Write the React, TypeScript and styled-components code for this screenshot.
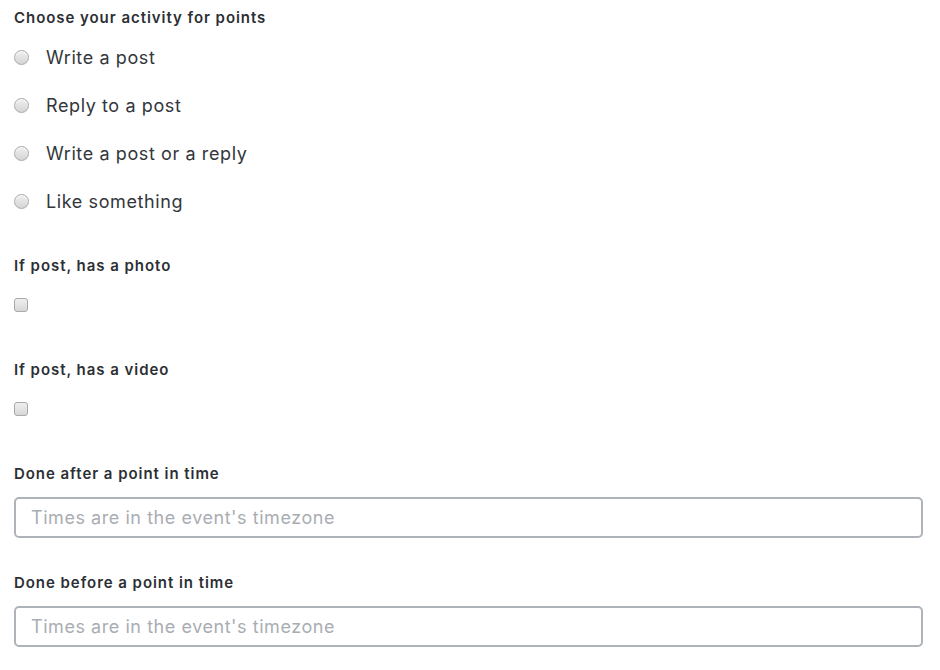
import React from 'react';
import styled, { createGlobalStyle } from 'styled-components';

const GlobalStyle = createGlobalStyle`
  body {
    margin: 0;
    background: #ffffff;
    font-family: Inter, "Noto Sans", sans-serif;
    color: #2c2f34;
  }
`

const activities = [
    "Write a post",
    "Reply to a post",
    "Write a post or a reply",
    "Like something"
]

function App() {
    return (
        <>
            <GlobalStyle />
            <Form>
                <Field gap={31}>
                    <Label>Choose your activity for points</Label>
                    <RadioList>
                        {activities.map(a => (
                            <RadioRow key={a}>
                                <Radio type="radio" name="activity" />
                                {a}
                            </RadioRow>
                        ))}
                    </RadioList>
                </Field>
                <Field gap={48}>
                    <Label>If post, has a photo</Label>
                    <Checkbox type="checkbox" />
                </Field>
                <Field gap={48}>
                    <Label>If post, has a video</Label>
                    <Checkbox type="checkbox" />
                </Field>
                <Field gap={35}>
                    <Label>Done after a point in time</Label>
                    <TextInput placeholder="Times are in the event's timezone" />
                </Field>
                <Field gap={0}>
                    <Label>Done before a point in time</Label>
                    <TextInput placeholder="Times are in the event's timezone" />
                </Field>
            </Form>
        </>
    )
}

const Form = styled.form`
    display: flex;
    flex-direction: column;
    padding: 8px 17px 0 14px;
`

const Field = styled.div<{ gap: number }>`
    display: flex;
    flex-direction: column;
    align-items: flex-start;
    margin-bottom: ${p => p.gap}px;
`

const Label = styled.label`
    font-size: 15px;
    font-weight: 600;
    line-height: 20px;
    letter-spacing: 0.95px;
    color: #2c2f34;
    margin-bottom: 12px;
`

const RadioList = styled.div`
    display: flex;
    flex-direction: column;
    margin-top: -7px;
`

const RadioRow = styled.label`
    display: flex;
    align-items: center;
    height: 48px;
    font-size: 18px;
    letter-spacing: 0.6px;
    color: #33363b;
`

const Radio = styled.input`
    appearance: none;
    box-sizing: border-box;
    width: 15px;
    height: 15px;
    margin: 0 17px 0 0;
    border-radius: 50%;
    border: 1px solid #a9a9a9;
    background: linear-gradient(#f0f0f0, #d4d4d4);
    box-shadow: inset 0 1px 1px rgba(255, 255, 255, 0.8);
`

const Checkbox = styled.input`
    appearance: none;
    box-sizing: border-box;
    width: 14px;
    height: 14px;
    margin: 10px 0 0 0;
    border-radius: 3px;
    border: 1px solid #a9a9a9;
    background: linear-gradient(#f0f0f0, #d6d6d6);
`

const TextInput = styled.input`
    box-sizing: border-box;
    width: 100%;
    height: 41px;
    margin-top: 1px;
    padding: 0 15px;
    border: 2px solid #aeb3ba;
    border-radius: 5px;
    font-family: Inter, "Noto Sans", sans-serif;
    font-size: 18px;
    letter-spacing: 0.55px;
    color: #2c2f34;
    outline: none;

    &::placeholder {
        color: #a9adb3;
    }
`

export default App;
